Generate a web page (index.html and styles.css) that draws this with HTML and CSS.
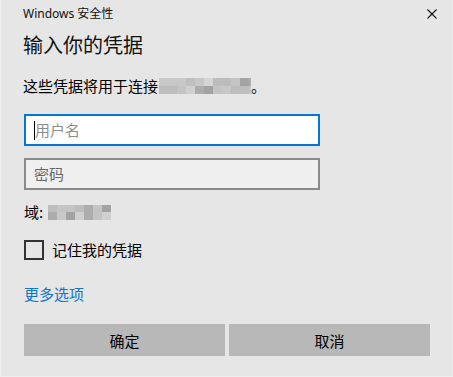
FILE: index.html
```html
<!DOCTYPE html>
<html lang="zh-CN">
<head>
<meta charset="utf-8">
<title>Windows 安全性</title>
<link rel="stylesheet" href="styles.css">
</head>
<body>
<div class="dialog">
  <div class="titlebar">
    <span class="title">Windows 安全性</span>
    <svg class="close" width="10" height="10" viewBox="0 0 10 10"><path d="M0.5 0.5 L9.5 9.5 M9.5 0.5 L0.5 9.5" stroke="#111" stroke-width="1.1" fill="none"/></svg>
  </div>
  <div class="content">
    <h1 class="heading">输入你的凭据</h1>
    <p class="desc">这些凭据将用于连接<span class="blur blur-host"><i class="a"></i><i class="b"></i><i class="a"></i><i class="b"></i><i class="a"></i><i class="c"></i><i class="d"></i><i class="e"></i><i class="a"></i><i class="f"></i><i class="g"></i><i class="h"></i><i class="b"></i><i class="c"></i><i class="b"></i><i class="a"></i><i class="c"></i><i class="b"></i><i class="h"></i><i class="b"></i><i class="f"></i><i class="c"></i></span>。</p>
    <div class="field field-active"><span class="caret"></span><span class="placeholder">用户名</span></div>
    <div class="field field-idle"><span class="placeholder dark">密码</span></div>
    <p class="domain">域:<span class="blur blur-domain"><i class="b"></i><i class="f"></i><i class="c"></i><i class="a"></i><i class="c"></i><i class="h"></i><i class="b"></i><i class="e"></i><i class="f"></i><i class="f"></i><i class="c"></i><i class="c"></i><i class="h"></i><i class="e"></i></span></p>
    <label class="remember"><span class="box"></span><span>记住我的凭据</span></label>
    <a class="more">更多选项</a>
    <div class="buttons">
      <button class="btn">确定</button>
      <button class="btn">取消</button>
    </div>
  </div>
</div>
</body>
</html>
```

FILE: styles.css
```css
* { box-sizing: border-box; }
html, body { margin: 0; padding: 0; }
body {
  width: 453px;
  height: 377px;
  background: #e6e6e6;
  font-family: "Noto Sans", "Noto Sans CJK SC", sans-serif;
  color: #000;
  overflow: hidden;
}
.dialog {
  width: 453px;
  height: 377px;
  border: 1px solid #eeeeee;
  border-top: none;
}
.titlebar {
  height: 28px;
  display: flex;
  align-items: center;
  justify-content: space-between;
  padding: 0 15px 0 22px;
}
.title {
  font-size: 12px;
  line-height: 16px;
  color: #111;
}
.close { display: block; }
.content {
  padding: 0 22px 0 23px;
}
.heading {
  margin: 3px 0 0 -1px;
  font-size: 20px;
  font-weight: normal;
  line-height: 28px;
  font-family: "Noto Sans CJK SC", sans-serif;
  color: #111;
}
.desc {
  margin: 17px 0 0 -1px;
  font-size: 15px;
  line-height: 20px;
  display: flex;
  align-items: center;
  font-family: "Noto Sans CJK SC", sans-serif;
}
.blur {
  display: inline-grid;
  grid-auto-flow: column;
  grid-template-rows: 8px 8px;
}
.blur i { display: block; }
.blur-host {
  grid-template-columns: repeat(10, 9px) 2px;
  height: 16px;
  margin-left: 1px;
}
.blur-domain {
  grid-template-columns: repeat(7, 9px);
  grid-template-rows: 7px 8px;
  height: 15px;
  margin-left: 5px;
}
.blur .a { background: #c8c8c8; }
.blur .b { background: #bdbdbd; }
.blur .c { background: #c4c4c4; }
.blur .d { background: #bfbfbf; }
.blur .e { background: #d0d0d0; }
.blur .f { background: #adadad; }
.blur .g { background: #d6d6d6; }
.blur .h { background: #a3a3a3; }
.field {
  width: 296px;
  height: 32px;
  margin-top: 18px;
  border: 2px solid #7a7a7a;
  display: flex;
  align-items: center;
  padding-left: 8px;
  font-family: "Noto Sans CJK SC", sans-serif;
  font-size: 15px;
  line-height: 20px;
}
.field-active {
  border-color: #0078d7;
  background: #ffffff;
}
.field-idle {
  margin-top: 12px;
  border-color: #8a8a8a;
  background: #f0f0f0;
}
.caret {
  width: 1px;
  height: 19px;
  background: #000;
}
.placeholder { color: #8e8e8e; }
.placeholder.dark { color: #686868; }
.domain {
  margin: 12px 0 0 0;
  font-size: 15px;
  line-height: 20px;
  display: flex;
  align-items: center;
  font-family: "Noto Sans CJK SC", sans-serif;
}
.remember {
  margin-top: 18px;
  display: flex;
  align-items: center;
  height: 20px;
  font-size: 15px;
  line-height: 20px;
  font-family: "Noto Sans CJK SC", sans-serif;
}
.box {
  width: 20px;
  height: 20px;
  border: 2px solid #333;
  margin-right: 8px;
}
.more {
  display: block;
  margin-top: 24px;
  font-size: 15px;
  line-height: 20px;
  color: #0f75cf;
  font-family: "Noto Sans CJK SC", sans-serif;
}
.buttons {
  margin-top: 20px;
  display: flex;
  gap: 4px;
}
.btn {
  width: 201px;
  height: 32px;
  border: none;
  background: #b8b8b8;
  font-family: "Noto Sans CJK SC", sans-serif;
  font-size: 15px;
  color: #000;
  padding: 0;
}
```
